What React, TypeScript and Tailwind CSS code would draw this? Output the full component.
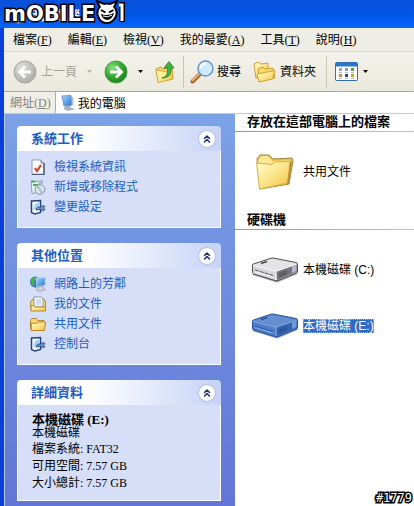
import type { ReactNode } from 'react'
import { ChevronsUp } from 'lucide-react'

const menus = [
  { label: '檔案', hotkey: 'F' },
  { label: '編輯', hotkey: 'E' },
  { label: '檢視', hotkey: 'V' },
  { label: '我的最愛', hotkey: 'A' },
  { label: '工具', hotkey: 'T' },
  { label: '說明', hotkey: 'H' },
]

function Gradients() {
  return (
    <svg className="absolute w-0 h-0" aria-hidden="true">
      <defs>
        <linearGradient id="folder" x1="0" y1="0" x2="1" y2="1">
          <stop offset="0" stopColor="#fffbd0" />
          <stop offset="0.5" stopColor="#fbe68a" />
          <stop offset="1" stopColor="#eebe3c" />
        </linearGradient>
        <radialGradient id="green" cx="0.35" cy="0.3" r="0.8">
          <stop offset="0" stopColor="#8ade7c" />
          <stop offset="0.5" stopColor="#35ab32" />
          <stop offset="1" stopColor="#157a1c" />
        </radialGradient>
        <radialGradient id="gray" cx="0.35" cy="0.3" r="0.8">
          <stop offset="0" stopColor="#dededb" />
          <stop offset="1" stopColor="#a8a8a5" />
        </radialGradient>
        <linearGradient id="screen" x1="0" y1="0" x2="1" y2="1">
          <stop offset="0" stopColor="#a9dcfa" />
          <stop offset="1" stopColor="#1f6fd0" />
        </linearGradient>
      </defs>
    </svg>
  )
}

function RoundArrow({ back = false }: { back?: boolean }) {
  return (
    <svg width="24" height="24" viewBox="0 0 24 24" className="shrink-0">
      <circle cx="12" cy="12" r="11" fill={back ? 'url(#gray)' : 'url(#green)'} stroke={back ? '#a3a39f' : '#4f9a4c'} />
      <path d={back ? 'M18 12H7M12 6.5L6.5 12L12 17.5' : 'M6 12H17M12 6.5L17.5 12L12 17.5'} fill="none" stroke="#fff" strokeWidth="2.8" />
    </svg>
  )
}

function Caret({ className = 'text-black' }: { className?: string }) {
  return (
    <svg width="5" height="3" viewBox="0 0 5 3" className={`shrink-0 ${className}`}>
      <path d="M0 0H5L2.5 3Z" fill="currentColor" />
    </svg>
  )
}

function UpFolderIcon() {
  return (
    <svg width="20" height="24" viewBox="0 0 20 24" className="shrink-0">
      <path d="M1 9L6 7L8 9L17 7L18 19L3 22Z" fill="#f6d568" stroke="#c79b32" />
      <path d="M1 10L13 12L18 19L3 22.5Z" fill="url(#folder)" stroke="#d8ab3b" />
      <path d="M7 18C12 17 13 13 12.5 8H9L14 1.5L19 8H16C16.5 14 14 18 7 18Z" fill="#3fb53c" stroke="#1d7f23" strokeWidth="0.8" />
    </svg>
  )
}

function SearchIcon() {
  return (
    <svg width="25" height="24" viewBox="0 0 25 24" className="shrink-0">
      <path d="M2.5 21.5L10 14" stroke="#a25f28" strokeWidth="4" strokeLinecap="round" />
      <path d="M2.5 20.5L9 14" stroke="#efb46c" strokeWidth="2" strokeLinecap="round" />
      <circle cx="15.5" cy="8.5" r="7.5" fill="#cfeafc" stroke="#6b96c8" strokeWidth="1.5" />
      <path d="M11 8C11 5 13 3.5 16 3.5" fill="none" stroke="#fff" strokeWidth="2" />
    </svg>
  )
}

function FoldersIcon() {
  return (
    <svg width="23" height="22" viewBox="0 0 23 22" className="shrink-0">
      <path d="M1 3L5 1L8 3L15 2L15 13L3 17Z" fill="url(#folder)" stroke="#cfa03a" />
      <path d="M5 8L10 6L12 8L20 7L22 17L6 20Z" fill="#f7d66b" stroke="#cfa03a" />
      <path d="M4 13L17 10.5L22 9.5L19.5 18L6 21Z" fill="url(#folder)" stroke="#cfa03a" />
    </svg>
  )
}

function ViewsIcon() {
  const dots = ['#8ba9c4', '#9099c8', '#4a9a52', '#e07b52', '#2f3f94', '#c3a62c']
  return (
    <svg width="24" height="20" viewBox="0 0 24 20" className="shrink-0">
      <rect x="0.5" y="0.5" width="22" height="18" rx="1" fill="#fff" stroke="#2f6db5" />
      <rect x="1" y="1" width="21" height="3.5" fill="#2c76c9" />
      {dots.map((c, i) => (
        <rect key={c} x={4 + (i % 3) * 6} y={i < 3 ? 6 : 12} width="3" height="3" fill={c} />
      ))}
      <path d="M4 10.5H7M10 10.5H13M16 10.5H19M4 16.5H7M10 16.5H13M16 16.5H19" stroke="#b9bcc4" />
    </svg>
  )
}

function ComputerIcon() {
  return (
    <svg width="16" height="16" viewBox="0 0 16 16" className="shrink-0">
      <path d="M2 1L11 0.5L12 10L4 11Z" fill="url(#screen)" stroke="#7295d6" />
      <path d="M11.5 1L13.5 3V11L12 10Z" fill="#b7bfd6" />
      <path d="M6 11H10V13L14 14L8 15.5L4 14Z" fill="#aeb4c6" stroke="#8189a3" strokeWidth="0.5" />
    </svg>
  )
}

function InfoIcon() {
  return (
    <svg width="16" height="16" viewBox="0 0 16 16">
      <path d="M2 1H11L14 4V15.5H2Z" fill="#fff" stroke="#8b97b4" />
      <path d="M14 4V15.5H2" fill="none" stroke="#4f5d83" strokeWidth="1.5" />
      <path d="M11 1V4H14" fill="#cfd8ec" stroke="#7181a5" />
      <path d="M5 9L7 12L11 6" fill="none" stroke="#d8402a" strokeWidth="2.2" />
    </svg>
  )
}

function ProgramsIcon() {
  return (
    <svg width="16" height="16" viewBox="0 0 16 16">
      <path d="M1 3L9 2L10 13L2 14.5Z" fill="#e4ecf4" stroke="#8fa1b5" />
      <path d="M1 1.5H5V3.5H1ZM3 5H8V7H3Z" fill="#4fa873" />
      <path d="M10 1H13V5H10Z" fill="#a9bdd2" />
      <circle cx="10" cy="10.5" r="4.8" fill="#e2e7f0" stroke="#8391a9" />
      <path d="M10 10.5L5.5 8.5A5 5 0 0 1 9 6Z" fill="#9ad3a4" />
      <path d="M10 10.5L14 13A5 5 0 0 1 10 15Z" fill="#b7bfdc" />
      <circle cx="10" cy="10.5" r="1.3" fill="#fff" stroke="#8391a9" strokeWidth="0.7" />
    </svg>
  )
}

function SettingsIcon() {
  return (
    <svg width="16" height="16" viewBox="0 0 16 16">
      <path d="M1.5 2L10.5 1.5V13.5L5 15L1.5 13.5Z" fill="#f4faff" stroke="#24427c" strokeWidth="1.5" />
      <path d="M3 10L5 5L9 3V8L5 11Z" fill="#a5d2f4" />
      <path d="M6 10L8 8H11L13 6.5L15 7.5L13.5 9L15 10.5L13 12L11 10.5H8L7 11.5Z" fill="#6f93c8" stroke="#24427c" strokeWidth="0.8" />
    </svg>
  )
}

function NetworkIcon() {
  return (
    <svg width="16" height="16" viewBox="0 0 16 16">
      <circle cx="5.5" cy="6" r="5.5" fill="#2f77cf" />
      <path d="M1 3C3 0 6 1 6 3L4 5L5 8L3 10C1 8 0 5 1 3Z" fill="#49b04a" />
      <path d="M6 2L15.5 1.5L15 9.5L7 10.5Z" fill="url(#screen)" stroke="#b8d2ee" />
      <path d="M9 10.5L13 10L13.5 12L15.5 13.5L10 15.5L6 14Z" fill="#d3cfdc" stroke="#8e8ba3" strokeWidth="0.6" />
    </svg>
  )
}

function DocumentsIcon() {
  return (
    <svg width="16" height="16" viewBox="0 0 16 16">
      <path d="M0.5 6L3 3H14L15.5 6V14.5H1Z" fill="#f7d773" stroke="#b68a2c" />
      <path d="M4 1H11L13 3V11H4Z" fill="#fff" stroke="#7f93bd" />
      <path d="M6 4H11M6 6H11M6 8H11" stroke="#8ea7d2" strokeWidth="0.8" />
      <path d="M1 10V15H15.5V11H5L4 9.5Z" fill="url(#folder)" stroke="#b68a2c" />
    </svg>
  )
}

function SmallFolderIcon() {
  return (
    <svg width="16" height="16" viewBox="0 0 16 16">
      <path d="M0.5 13.5V4.5L2 2.5H6L7.5 4.5H14V7" fill="#f7d773" stroke="#b68a2c" />
      <path d="M1 14.5L1.5 7.5L7 7L8 6H15.5L14.5 14.5Z" fill="url(#folder)" stroke="#b68a2c" />
    </svg>
  )
}

function BigFolderIcon() {
  return (
    <svg width="40" height="38" viewBox="0 0 40 38" className="shrink-0">
      <path d="M2 6L5 2H14L18 6L37 5L38 8L34 31L5 36Z" fill="#e9c04d" stroke="#a8863a" />
      <path d="M3 8L6 3H13L17 8L34 7.5L36 10L5 12Z" fill="#fae898" />
      <path d="M1.5 10L17 11.5L20 9L35 8.5L33 30L4.5 36Z" fill="url(#folder)" stroke="#d9b248" />
      <path d="M35 9L37 8L34 31L32 31Z" fill="#b3923e" />
    </svg>
  )
}

function DriveIcon({ selected = false }: { selected?: boolean }) {
  const [top, front, side, line, light] = selected
    ? ['#6490d2', '#4f7fc8', '#3462ab', '#28509a', '#86ace2']
    : ['#e6e5e6', '#d6d5d8', '#77757c', '#504f56', '#ffffff']
  return (
    <svg width="48" height="26" viewBox="0 0 48 26" className="shrink-0">
      <path d="M2 15L24 22L47 13L46 17L26 25.5L2 18Z" fill={line} opacity="0.6" />
      <path d="M1.5 8Q1.5 7.5 2.5 7L20 1.2Q21.5 0.8 23 1.2L45 5.5Q46.5 6 46.5 7V14.5Q46.5 15.5 45.5 16L27 23.5Q25.5 24 24 23.5L2.5 17Q1.5 16.5 1.5 15.5Z" fill={front} stroke={line} />
      <path d="M3 7.8L21 2L45 6.5L25 13.5Z" fill={top} />
      <path d="M25 14.5L46 7V14.8L26 23.2Z" fill={side} />
      <path d="M2 8.5L25 14.2L46 7" fill="none" stroke={light} />
      <path d="M25 14V23" stroke={light} />
      <path d="M4 13L22 18.5" stroke={line} strokeDasharray="4 1" />
      <path d="M4 14.5L22 20" stroke={light} />
      <path d="M28 16L36 13V17.5L28 20.5Z" fill={line} opacity="0.6" />
      <path d="M41 9.5L45.5 8V14L41 16Z" fill={selected ? '#6f9be0' : '#b9b4d4'} />
      <path d="M10 6.5L16 4.5" stroke={line} strokeWidth="1.8" />
    </svg>
  )
}

function Logo() {
  return (
    <div className="absolute left-1 top-0 z-10 flex items-start h-7 text-white" aria-label="MOBILE01">
      <span className="mt-0.5 font-['DejaVu_Sans'] font-bold text-[21px] leading-6 [-webkit-text-stroke:3px_#000] [paint-order:stroke]">mOBILE</span>
      <svg width="32" height="25" viewBox="0 0 32 25" className="shrink-0">
        <g transform="translate(1 2)">
          <path d="M5 5L3 1L8 3Q11 2 14 3L19 1L17 5Q21 9 19 14Q16 20 11 20Q5 20 3 14Q1 9 5 5Z" fill="#000" stroke="#000" strokeWidth="4" />
          <path d="M23 3H26V20" fill="none" stroke="#000" strokeWidth="6" />
          <path d="M5 5L3 1L8 3Q11 2 14 3L19 1L17 5Q21 9 19 14Q16 20 11 20Q5 20 3 14Q1 9 5 5Z" fill="#fff" />
          <path d="M5 8L9.5 10.5M17.5 8L13 10.5" stroke="#000" strokeWidth="2" />
          <path d="M5 12Q11 14.5 18 11Q16 18 11 18Q6 17 5 12Z" fill="#000" />
          <path d="M7 14Q12 16 16 13" fill="none" stroke="#fff" />
          <path d="M23 3H26V19" fill="none" stroke="#fff" strokeWidth="3" />
        </g>
      </svg>
    </div>
  )
}

function Panel({ title, children }: { title: string; children: ReactNode }) {
  return (
    <section>
      <header className="flex items-center justify-between h-[25px] pl-3.5 pr-1.5 rounded-t bg-linear-to-r from-white from-35% to-[#c6d3f7]">
        <h2 className="text-[13px] font-bold text-[#215dc6]">{title}</h2>
        <button aria-label={title} className="flex items-center justify-center size-4 rounded-full bg-white shadow-[0_0_2px_#7f8fbd] text-[#1c2f66]">
          <ChevronsUp className="size-3" strokeWidth={3} />
        </button>
      </header>
      <div className="border border-t-0 border-white bg-[#d6dff7]">{children}</div>
    </section>
  )
}

function TaskList({ items }: { items: { icon: ReactNode; label: string }[] }) {
  return (
    <ul className="pt-1.5 pb-2.5 pl-3">
      {items.map((item) => (
        <li key={item.label} className="h-5">
          <a href="#" className="flex items-center gap-2 h-5 text-[#215dc6]">
            {item.icon}
            {item.label}
          </a>
        </li>
      ))}
    </ul>
  )
}

function GroupTitle({ children }: { children: ReactNode }) {
  return (
    <div>
      <h2 className="pl-3 h-[17px] text-[13px] leading-4 font-bold">{children}</h2>
      <div className="h-px bg-linear-to-r from-[#70a0dd] to-[#a9c8ee]" />
    </div>
  )
}

export default function App() {
  return (
    <div className="relative flex flex-col min-h-screen overflow-hidden bg-white text-xs text-black font-['Liberation_Serif','Noto_Sans_CJK_TC',serif]">
      <Gradients />
      <Logo />
      <div className="flex items-center gap-0.5 h-7 pl-2.5 pt-1 shrink-0 bg-linear-to-b from-[#0a50d8] via-[#0055e5] to-[#0765fc] text-white">
        <ComputerIcon />
        <h1 className="text-[13px] font-bold">我的電腦</h1>
      </div>

      <div className="flex flex-col flex-1 border-l-4 border-[#0a3fdc]">
        <nav className="flex items-center gap-4 h-6 pl-[9px] bg-[#efeee6] border-b border-[#dcd9c8]">
          {menus.map((menu) => (
            <button key={menu.hotkey} className="whitespace-nowrap">
              {menu.label}(<u>{menu.hotkey}</u>)
            </button>
          ))}
        </nav>

        <div className="flex items-center h-10 pl-[9px] bg-linear-to-b from-[#f3f2eb] to-[#ebe9dd] border-b border-[#a9a996]">
          <button className="flex items-center gap-1 text-[#a5a498]">
            <RoundArrow back />
            上一頁
          </button>
          <Caret className="ml-2.5 text-[#b5b4aa]" />
          <button aria-label="下一頁" className="ml-3"><RoundArrow /></button>
          <Caret className="ml-2.5" />
          <button aria-label="往上" className="ml-3"><UpFolderIcon /></button>
          <div className="ml-2 w-px h-8 bg-[#c9c6b4]" />
          <button className="flex items-center gap-0.5 ml-1.5 whitespace-nowrap">
            <SearchIcon />
            搜尋
          </button>
          <button className="flex items-center gap-1 ml-3 whitespace-nowrap">
            <FoldersIcon />
            資料夾
          </button>
          <div className="ml-2.5 w-px h-8 bg-[#c9c6b4]" />
          <button aria-label="檢視" className="flex items-center gap-1 ml-2">
            <ViewsIcon />
            <Caret />
          </button>
        </div>

        <div className="flex items-stretch h-[21px] bg-[#efeee6]">
          <label htmlFor="address" className="flex items-center pl-1.5 pr-1 text-[#85847a]">
            網址(<u>D</u>)
          </label>
          <div className="flex items-center gap-0.5 flex-1 min-w-0 pl-1 bg-white border-l border-[#9db0c6]">
            <ComputerIcon />
            <input id="address" defaultValue="我的電腦" className="flex-1 min-w-0 h-5 outline-none" />
          </div>
        </div>

        <div className="flex flex-1 border-l border-t border-[#b7cbee]">
          <aside className="flex flex-col gap-[15px] w-[230px] shrink-0 pl-3 pt-3 pb-1 pr-3.5 bg-linear-to-b from-[#7ba2e7] to-[#6375d6]">
            <Panel title="系統工作">
              <TaskList
                items={[
                  { icon: <InfoIcon />, label: '檢視系統資訊' },
                  { icon: <ProgramsIcon />, label: '新增或移除程式' },
                  { icon: <SettingsIcon />, label: '變更設定' },
                ]}
              />
            </Panel>
            <Panel title="其他位置">
              <TaskList
                items={[
                  { icon: <NetworkIcon />, label: '網路上的芳鄰' },
                  { icon: <DocumentsIcon />, label: '我的文件' },
                  { icon: <SmallFolderIcon />, label: '共用文件' },
                  { icon: <SettingsIcon />, label: '控制台' },
                ]}
              />
            </Panel>
            <Panel title="詳細資料">
              <div className="pt-2 pb-2 pl-3.5 leading-[17px]">
                <p className="text-[13px] leading-[14px] font-bold">本機磁碟 (E:)</p>
                <p className="leading-3 mb-0.5">本機磁碟</p>
                <p>檔案系統: FAT32</p>
                <p>可用空間: 7.57 GB</p>
                <p>大小總計: 7.57 GB</p>
              </div>
            </Panel>
          </aside>

          <main className="flex-1 min-w-0">
            <GroupTitle>存放在這部電腦上的檔案</GroupTitle>
            <button className="flex items-center gap-2 h-20 pl-5">
              <BigFolderIcon />
              <span>共用文件</span>
            </button>
            <GroupTitle>硬碟機</GroupTitle>
            <button className="flex items-center gap-1 h-20 pl-4">
              <DriveIcon />
              <span className="font-['Liberation_Sans','Noto_Sans_CJK_TC',sans-serif]">本機磁碟 (C:)</span>
            </button>
            <button className="flex items-center gap-1 h-8 pl-4">
              <DriveIcon selected />
              <span className="leading-[14px] bg-[#316ac5] text-white outline outline-dotted outline-[#9db8e2] -outline-offset-1 font-['Liberation_Sans','Noto_Sans_CJK_TC',sans-serif]">本機磁碟 (E:)</span>
            </button>
          </main>
        </div>
      </div>

      <span className="absolute right-0.5 bottom-0 font-['DejaVu_Sans_Mono'] text-xs leading-4 text-white [-webkit-text-stroke:3px_#000] [paint-order:stroke]">#1779</span>
    </div>
  )
}
